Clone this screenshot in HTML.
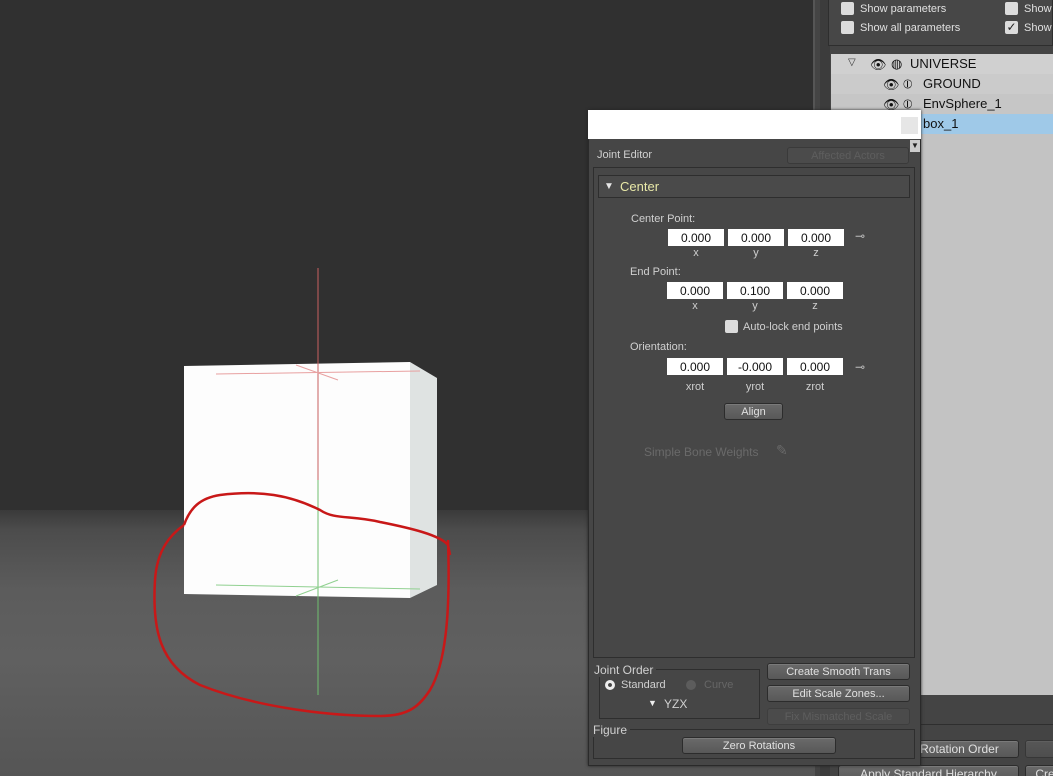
<!DOCTYPE html>
<html><head><style>
*{margin:0;padding:0;box-sizing:border-box}
html,body{width:1053px;height:776px;overflow:hidden}
body{position:relative;font-family:"Liberation Sans",sans-serif;background:#2f2f2f}
.a{position:absolute}
.t{position:absolute;font-size:11px;color:#d0d0d0;white-space:nowrap}
.fld{position:absolute;width:56px;height:17px;background:#fff;color:#111;font-size:12px;text-align:center;line-height:18px}
.lbl{position:absolute;font-size:11px;color:#cfcfcf;width:56px;text-align:center}
.btn{position:absolute;height:17px;border:1px solid #2c2c2c;border-radius:3px;background:linear-gradient(#6a6a6a,#585858);color:#e0e0e0;font-size:11px;text-align:center;line-height:17px;box-shadow:inset 0 1px 0 #7a7a7a}
.cb{position:absolute;width:13px;height:13px;background:#dcdcdc;border-radius:2px}
</style></head><body>
<div class="a" style="left:0;top:0;width:813px;height:512px;background:#303030"></div>
<div class="a" style="left:0;top:510px;width:813px;height:266px;background:linear-gradient(#3a3a3a 0px,#4c4c4c 20px,#5c5c5c 80px,#606060 150px,#555 266px)"></div>
<svg class="a" style="left:0;top:0" width="813" height="776">
<polygon points="184,366 410,362 410,598 184,594" fill="#fdfdfd"/>
<polygon points="410,362 437,378 437,585 410,598" fill="#dfe3e2"/>
<line x1="318" y1="268" x2="318" y2="480" stroke="#c86060" stroke-width="1"/>
<line x1="318" y1="480" x2="318" y2="695" stroke="#70c070" stroke-width="1"/>
<line x1="216" y1="374" x2="420" y2="371" stroke="#e8a0a0" stroke-width="1"/>
<line x1="296" y1="365" x2="338" y2="380" stroke="#e8a0a0" stroke-width="1"/>
<line x1="216" y1="585" x2="420" y2="589" stroke="#90d090" stroke-width="1"/>
<line x1="296" y1="596" x2="338" y2="580" stroke="#90d090" stroke-width="1"/>
<path d="M184,525 C190,508 200,498 220,495 C260,490 290,495 320,510 C335,520 350,515 380,522 C410,528 440,535 448,545 L450,555 M448,540 C450,600 448,660 430,690 C420,705 410,716 380,716 C320,716 250,705 200,685 C160,665 152,630 155,580 C157,550 170,535 184,525" fill="none" stroke="#c81818" stroke-width="2.5"/>
</svg>
<div class="a" style="left:813px;top:0;width:240px;height:776px;background:#444;border-left:2px solid #555"></div>
<div class="a" style="left:820px;top:0;width:10px;height:776px;background:#3c3c3c"></div>
<div class="a" style="left:828px;top:0;width:225px;height:46px;background:#474747;border:1px solid #2e2e2e;border-top:none"></div>
<div class="cb" style="left:841px;top:2px"></div><div class="t" style="left:860px;top:3px;color:#e0e0e0">Show parameters</div>
<div class="cb" style="left:841px;top:21px"></div><div class="t" style="left:860px;top:22px;color:#e0e0e0">Show all parameters</div>
<div class="cb" style="left:1005px;top:2px"></div><div class="t" style="left:1024px;top:3px;color:#e0e0e0">Show</div>
<div class="cb" style="left:1005px;top:21px;color:#222;font-size:12px;line-height:13px;text-align:center">✓</div><div class="t" style="left:1024px;top:22px;color:#e0e0e0">Show</div>
<div class="a" style="left:831px;top:54px;width:222px;height:641px;background:#c3c3c3"></div>
<div class="a" style="left:831px;top:54px;width:222px;height:20px;background:#d0d0d0"></div>
<div class="a" style="left:831px;top:74px;width:222px;height:20px;background:#cbcbcb"></div>
<div class="a" style="left:831px;top:94px;width:222px;height:20px;background:#c6c6c6"></div>
<div class="a" style="left:918px;top:114px;width:135px;height:20px;background:#9fc9e8"></div>
<div class="t" style="left:848px;top:57px;color:#333;font-size:10px">▽</div>
<div class="t" style="left:870px;top:57px;color:#111;font-size:13px">👁</div>
<div class="t" style="left:891px;top:56px;color:#111;font-size:13px">◍</div>
<div class="t" style="left:910px;top:56px;color:#111;font-size:13px">UNIVERSE</div>
<div class="t" style="left:883px;top:77px;color:#111;font-size:13px">👁</div>
<div class="t" style="left:903px;top:76px;color:#111;font-size:13px">⦶</div>
<div class="t" style="left:923px;top:76px;color:#111;font-size:13px">GROUND</div>
<div class="t" style="left:883px;top:97px;color:#111;font-size:13px">👁</div>
<div class="t" style="left:903px;top:96px;color:#111;font-size:13px">⦶</div>
<div class="t" style="left:923px;top:96px;color:#111;font-size:13px">EnvSphere_1</div>
<div class="t" style="left:923px;top:116px;color:#111;font-size:13px">box_1</div>
<div class="a" style="left:831px;top:695px;width:222px;height:30px;background:#444;border-bottom:1px solid #2e2e2e"></div>
<div class="btn" style="left:900px;top:740px;width:119px;height:18px;line-height:17px;font-size:12px">Rotation Order</div>
<div class="btn" style="left:1025px;top:740px;width:40px;height:18px;opacity:.5"></div>
<div class="btn" style="left:838px;top:765px;width:181px;height:18px;font-size:12px">Apply Standard Hierarchy</div>
<div class="btn" style="left:1025px;top:765px;width:40px;height:18px;font-size:12px">Cre</div>
<div class="a" style="left:588px;top:110px;width:333px;height:656px;background:#464646;border:1px solid #2a2a2a;box-shadow:0 0 3px #222"></div>
<div class="a" style="left:588px;top:110px;width:333px;height:29px;background:#fff"></div>
<div class="a" style="left:901px;top:117px;width:17px;height:17px;background:#e6e6e6"></div>
<div class="a" style="left:910px;top:140px;width:10px;height:12px;background:#ccc;color:#222;font-size:8px;text-align:center;line-height:12px">▼</div>
<div class="t" style="left:597px;top:149px">Joint Editor</div>
<div class="btn" style="left:787px;top:147px;width:122px;color:#5e5e5e;background:#4b4b4b;box-shadow:none;border-color:#3a3a3a">Affected Actors</div>
<div class="a" style="left:593px;top:167px;width:322px;height:491px;border:1px solid #2e2e2e;background:#474747"></div>
<div class="a" style="left:598px;top:175px;width:312px;height:23px;border:1px solid #2e2e2e;background:#4a4a4a"></div>
<div class="t" style="left:604px;top:181px;color:#e6e6e6;font-size:10px">▼</div>
<div class="t" style="left:620px;top:179px;color:#e8e8a8;font-size:13px">Center</div>
<div class="t" style="left:631px;top:213px">Center Point:</div>
<div class="fld" style="left:668px;top:229px">0.000</div><div class="fld" style="left:728px;top:229px">0.000</div><div class="fld" style="left:788px;top:229px">0.000</div>
<div class="lbl" style="left:668px;top:247px">x</div><div class="lbl" style="left:728px;top:247px">y</div><div class="lbl" style="left:788px;top:247px">z</div>
<div class="t" style="left:855px;top:229px;color:#bbb;font-size:12px">⊸</div>
<div class="t" style="left:630px;top:266px">End Point:</div>
<div class="fld" style="left:667px;top:282px">0.000</div><div class="fld" style="left:727px;top:282px">0.100</div><div class="fld" style="left:787px;top:282px">0.000</div>
<div class="lbl" style="left:667px;top:300px">x</div><div class="lbl" style="left:727px;top:300px">y</div><div class="lbl" style="left:787px;top:300px">z</div>
<div class="cb" style="left:725px;top:320px"></div><div class="t" style="left:743px;top:321px">Auto-lock end points</div>
<div class="t" style="left:630px;top:341px">Orientation:</div>
<div class="fld" style="left:667px;top:358px">0.000</div><div class="fld" style="left:727px;top:358px">-0.000</div><div class="fld" style="left:787px;top:358px">0.000</div>
<div class="lbl" style="left:667px;top:381px">xrot</div><div class="lbl" style="left:727px;top:381px">yrot</div><div class="lbl" style="left:787px;top:381px">zrot</div>
<div class="t" style="left:855px;top:360px;color:#bbb;font-size:12px">⊸</div>
<div class="btn" style="left:724px;top:403px;width:59px">Align</div>
<div class="t" style="left:644px;top:445px;color:#6a6a6a;font-size:12px">Simple Bone Weights</div>
<div class="t" style="left:776px;top:442px;color:#6a6a6a;font-size:14px">✎</div>
<div class="a" style="left:599px;top:669px;width:161px;height:50px;border:1px solid #2e2e2e"></div>
<div class="t" style="left:594px;top:663px;background:#464646;padding-right:3px;font-size:12px">Joint Order</div>
<div class="a" style="left:605px;top:680px;width:10px;height:10px;border-radius:50%;background:#eee;border:3px solid #eee;box-shadow:inset 0 0 0 2px #444"></div>
<div class="t" style="left:621px;top:679px">Standard</div>
<div class="a" style="left:686px;top:680px;width:10px;height:10px;border-radius:50%;background:#5c5c5c"></div>
<div class="t" style="left:704px;top:679px;color:#666">Curve</div>
<div class="t" style="left:648px;top:698px;color:#eee;font-size:9px">▼</div>
<div class="t" style="left:664px;top:697px;font-size:12px">YZX</div>
<div class="btn" style="left:767px;top:663px;width:143px">Create Smooth Trans</div>
<div class="btn" style="left:767px;top:685px;width:143px">Edit Scale Zones...</div>
<div class="btn" style="left:767px;top:708px;width:143px;color:#5e5e5e;background:#4b4b4b;box-shadow:none;border-color:#3e3e3e">Fix Mismatched Scale</div>
<div class="a" style="left:593px;top:729px;width:322px;height:30px;border:1px solid #2e2e2e"></div>
<div class="t" style="left:593px;top:723px;background:#464646;padding-right:3px;font-size:12px">Figure</div>
<div class="btn" style="left:682px;top:737px;width:154px">Zero Rotations</div>
</body></html>
